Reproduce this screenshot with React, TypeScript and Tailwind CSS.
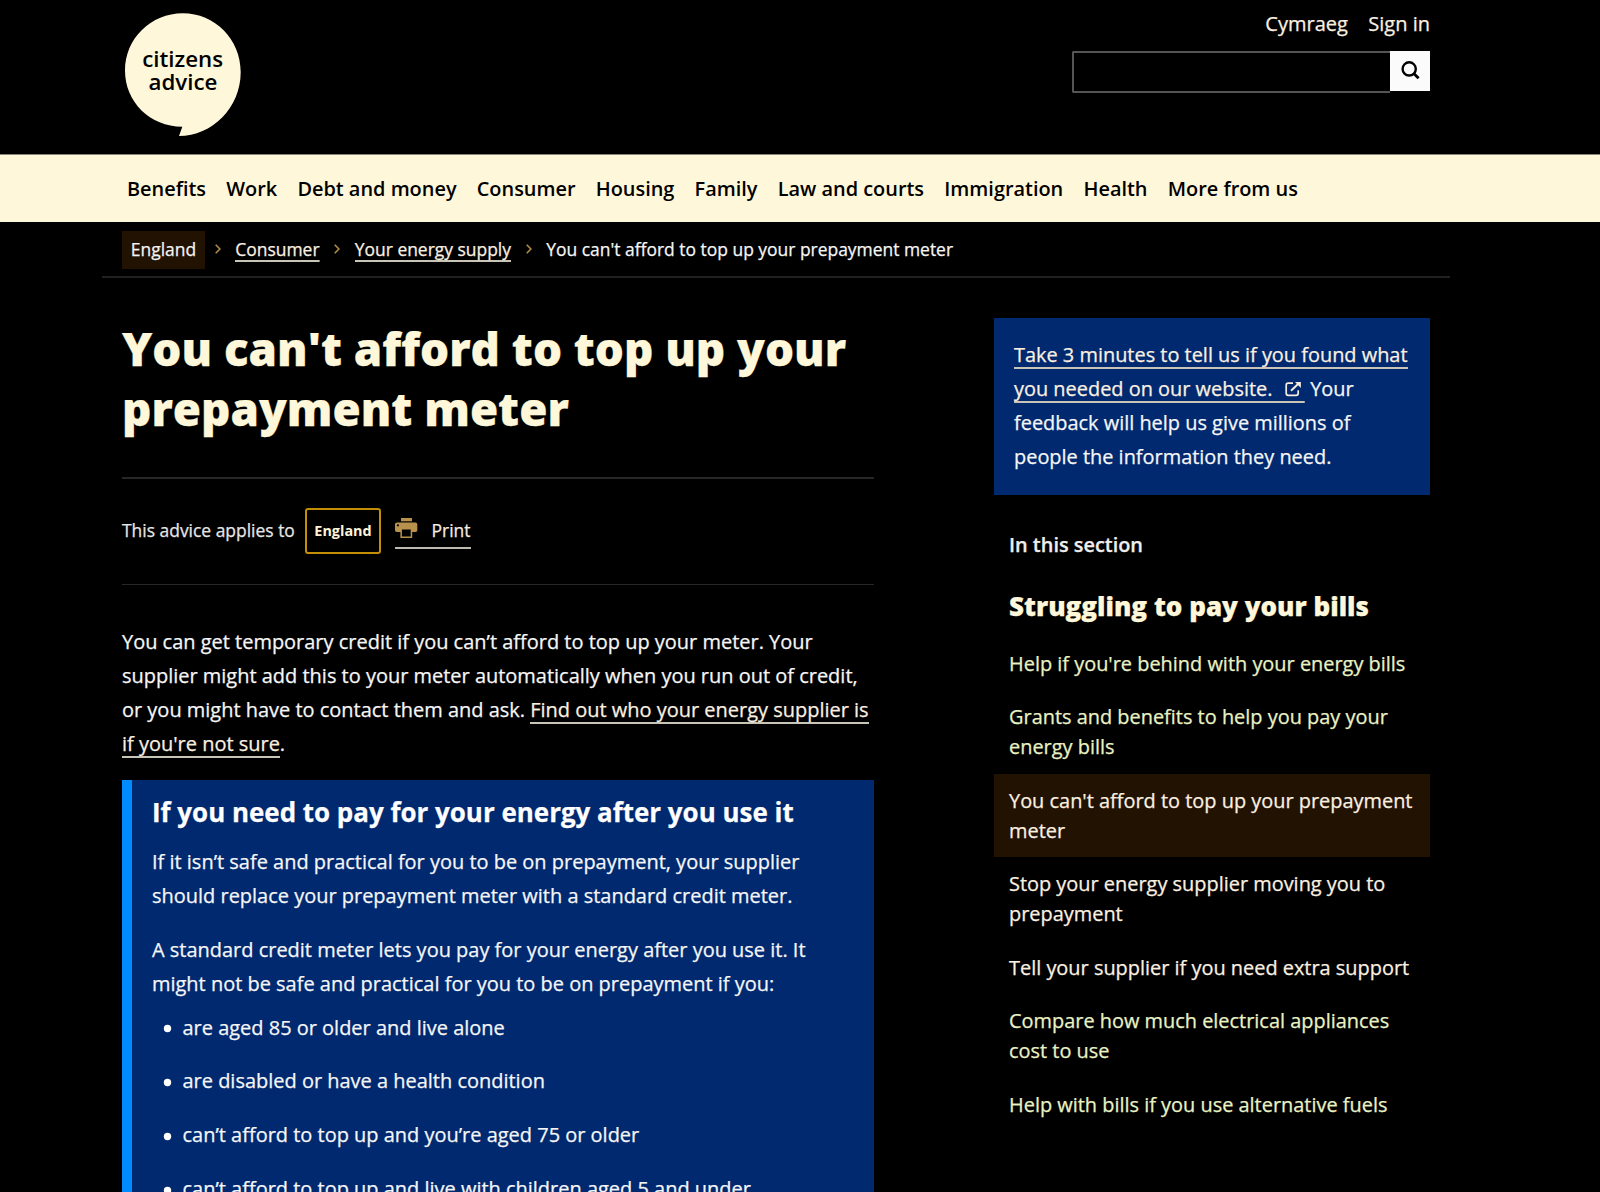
import React from 'react';

const navItems = [
  'Benefits', 'Work', 'Debt and money', 'Consumer', 'Housing',
  'Family', 'Law and courts', 'Immigration', 'Health', 'More from us',
];

const sectionLinks = [
  { label: "Help if you're behind with your energy bills", tone: 'visited' },
  { label: 'Grants and benefits to help you pay your energy bills', tone: 'visited' },
  { label: "You can't afford to top up your prepayment meter", tone: 'current' },
  { label: 'Stop your energy supplier moving you to prepayment', tone: 'plain' },
  { label: 'Tell your supplier if you need extra support', tone: 'plain' },
  { label: 'Compare how much electrical appliances cost to use', tone: 'visited' },
  { label: 'Help with bills if you use alternative fuels', tone: 'visited' },
];

const toneClass: Record<string, string> = {
  visited: 'text-[#e9f2c4]',
  plain: 'text-[#fbf0e0]',
  current: 'bg-[#221202] text-[#fbf0e0]',
};

const conditions = [
  'are aged 85 or older and live alone',
  'are disabled or have a health condition',
  'can’t afford to top up and you’re aged 75 or older',
  'can’t afford to top up and live with children aged 5 and under',
];

function Logo() {
  return (
    <svg className="absolute left-[3px] top-[13px]" width="116" height="124" viewBox="125 13 116 124" role="img">
      <path
        fill="#fff7d9"
        d="M182.8 13.2C214.7 13.2 240.7 39 240.7 72C240.7 108 212 136 179 136L182.3 126.7C150 126.7 125 102 125 70.5C125 38.5 151 13.2 182.8 13.2Z"
      />
      <g fill="#000" fontFamily="Open Sans, sans-serif" fontWeight="600" fontSize="22.3" textAnchor="middle">
        <text x="182.6" y="67.4">citizens</text>
        <text x="182.9" y="90">advice</text>
      </g>
    </svg>
  );
}

function Underlined({ children }: { children: React.ReactNode }) {
  return (
    <a className="bg-[linear-gradient(#c9c5b6,#c9c5b6)] bg-[length:100%_2px] bg-bottom bg-no-repeat pb-px text-[#fbf0e0]">
      {children}
    </a>
  );
}

function Chevron() {
  return (
    <svg className="ml-[9.7px] mr-[14.6px] shrink-0" width="6" height="10" viewBox="0 0 6 10" fill="none" stroke="#b08a45" strokeWidth="1.6">
      <path d="M0.7 0.7L4.9 5L0.7 9.3" />
    </svg>
  );
}

function Header() {
  return (
    <header className="h-[154px]">
      <div className="relative ml-[122px] flex h-full w-[1308px] justify-end">
        <Logo />
        <div className="flex w-[358px] flex-col pt-[7px]">
          <div className="flex justify-end gap-[20.5px] text-[20px] leading-[34px] text-[#fbf0e0]">
            <a>Cymraeg</a>
            <a>Sign in</a>
          </div>
          <div className="mt-[9px] flex items-start">
            <div className="mt-px h-[42px] flex-1 rounded-l-[2px] border-2 border-r-0 border-[#555]" />
            <button className="mt-[0.5px] flex size-10 items-center justify-center bg-[#fbfbfb]">
              <svg className="mb-px" width="20" height="20" viewBox="0 0 20 20" fill="none" stroke="#000" strokeWidth="2.4">
                <circle cx="9.2" cy="8.9" r="6.6" />
                <path d="M13.8 13.5L18.6 18.3" strokeWidth="2.8" />
              </svg>
            </button>
          </div>
        </div>
      </div>
    </header>
  );
}

export default function App() {
  return (
    <div className="h-[1192px] overflow-hidden bg-black font-['Open_Sans',sans-serif] text-[19.98px] text-[#f6f6f6] [-webkit-text-stroke:0.25px]">
      <Header />

      <nav className="h-[68px] border-t border-[#8a8678] bg-[#fff7d9]">
        <ul className="flex h-full gap-[20.2px] pl-[127px] text-[19.92px] font-semibold leading-[67px] text-black [-webkit-text-stroke:0px]">
          {navItems.map((item) => (
            <li key={item} className="whitespace-nowrap">{item}</li>
          ))}
        </ul>
      </nav>

      <div className="ml-[102px] flex h-[56px] w-[1348px] items-center border-b-2 border-[#212121] pl-5 text-[17.45px]">
        <span className="mt-px flex h-[38px] w-[83px] items-center justify-center bg-[#221202] text-[#f4f4f4]">England</span>
        <Chevron />
        <span><Underlined>Consumer</Underlined></span>
        <span className="w-[5px]" />
        <Chevron />
        <span><Underlined>Your energy supply</Underlined></span>
        <span className="w-[5px]" />
        <Chevron />
        <span>You can't afford to top up your prepayment meter</span>
      </div>

      <div className="ml-[122px] flex w-[1308px] justify-between pt-[39.5px]">
        <main className="w-[752px]">
          <h1 className="text-[45.7px] font-extrabold leading-[60px] text-[#fff7d9]">
            You can't afford to top up your<br />prepayment meter
          </h1>

          <div className="mt-[39.5px] flex h-[108px] items-start border-b border-t-2 border-[#272727] pt-[29px] text-[17.45px]">
            <span className="w-[183px] pt-[7px] leading-[30px] text-[#e6e6e6]">This advice applies to</span>
            <span className="flex h-[46px] w-[76px] items-center justify-center rounded-[3px] border-2 border-[#c38f04] text-[14.4px] font-bold text-[#fff3d6] [-webkit-text-stroke:0px]">
              England
            </span>
            <a className="ml-[14px] flex h-[41px] w-[75.5px] items-start justify-between border-b-2 border-[#bdb9b0] text-[#f7ece0]">
              <svg className="mt-[10px]" width="23" height="20" viewBox="0 0 23 20">
                <path fill="#b8924c" d="M6 0h11v3.3H6z" />
                <path fill="#b8924c" fillRule="evenodd" d="M2 4.6H20.3C21.5 4.6 22.3 5.4 22.3 6.6V12C22.3 13.2 21.7 13.9 20.6 13.9H17.2V20H5.4V13.9H1.9C.7 13.9 0 13.2 0 12V6.6C0 5.4.8 4.6 2 4.6ZM6.9 11.6V18.5H15.7V11.6Z" />
                <circle cx="2.9" cy="7.3" r="1.1" fill="#000" />
              </svg>
              <span className="pt-[7px] leading-[30px]">Print</span>
            </a>
          </div>

          <p className="mt-[40px] leading-[33.9px]">
            You can get temporary credit if you can’t afford to top up your meter. Your supplier might add this to your
            meter automatically when you run out of credit, or you might have to contact them and ask.{' '}
            <Underlined>Find out who your energy supplier is if you're not sure</Underlined>.
          </p>

          <section className="mt-[19.3px] h-[500px] border-l-10 border-[#008cff] bg-[#002970] pl-5 pr-[60px] pt-[12.7px]">
            <h2 className="text-[25.95px] font-bold leading-[39px] text-white">
              If you need to pay for your energy after you use it
            </h2>
            <p className="mt-[13.3px] leading-[33.9px]">
              If it isn’t safe and practical for you to be on prepayment, your supplier should replace your prepayment
              meter with a standard credit meter.
            </p>
            <p className="mt-5 leading-[33.9px]">
              A standard credit meter lets you pay for your energy after you use it. It might not be safe and practical
              for you to be on prepayment if you:
            </p>
            <ul className="mt-[10px] flex flex-col gap-5 leading-[33.9px]">
              {conditions.map((text) => (
                <li key={text} className="flex items-center whitespace-nowrap">
                  <svg className="ml-[11px] mr-[10.5px] mt-[2px]" width="9" height="9" viewBox="0 0 9 9">
                    <circle cx="4.5" cy="4.5" r="3.7" fill="#fff" />
                  </svg>
                  {text}
                </li>
              ))}
            </ul>
          </section>
        </main>

        <aside className="w-[436px]">
          <div className="h-[177px] bg-[#002970] px-5 pt-5 text-[19.93px] leading-[34px]">
            <Underlined>
              Take 3 minutes to tell us if you found what you needed on our website.
              <svg className="ml-[13px] mr-[2.5px] inline-block align-[-1px]" width="17" height="16" viewBox="0 0 17 16" fill="none" stroke="#f7ece0" strokeWidth="1.7">
                <path d="M8 2.2H3.2C1.9 2.2 1.2 2.9 1.2 4.2V12.3C1.2 13.6 1.9 14.3 3.2 14.3H11.2C12.5 14.3 13.2 13.6 13.2 12.3V9.2" />
                <path d="M6 9.8L13.6 2.6" strokeWidth="2" />
                <path d="M10 1H15.9V6.9Z" fill="#f7ece0" stroke="none" />
              </svg>
            </Underlined>{' '}
            Your feedback will help us give millions of people the information they need.
          </div>

          <h2 className="mt-[33px] px-[15px] text-[19.9px] font-semibold leading-[34px] text-[#eeeeee]">In this section</h2>
          <h3 className="mt-[25px] px-[15px] text-[26px] font-extrabold leading-[39px] text-[#fff7d9]">
            Struggling to pay your bills
          </h3>
          <ul className="mt-[11.3px] text-[19.93px] leading-[30px]">
            {sectionLinks.map(({ label, tone }) => (
              <li key={label} className={`${toneClass[tone]} px-[15px] py-[11.78px]`}>{label}</li>
            ))}
          </ul>
        </aside>
      </div>
    </div>
  );
}
